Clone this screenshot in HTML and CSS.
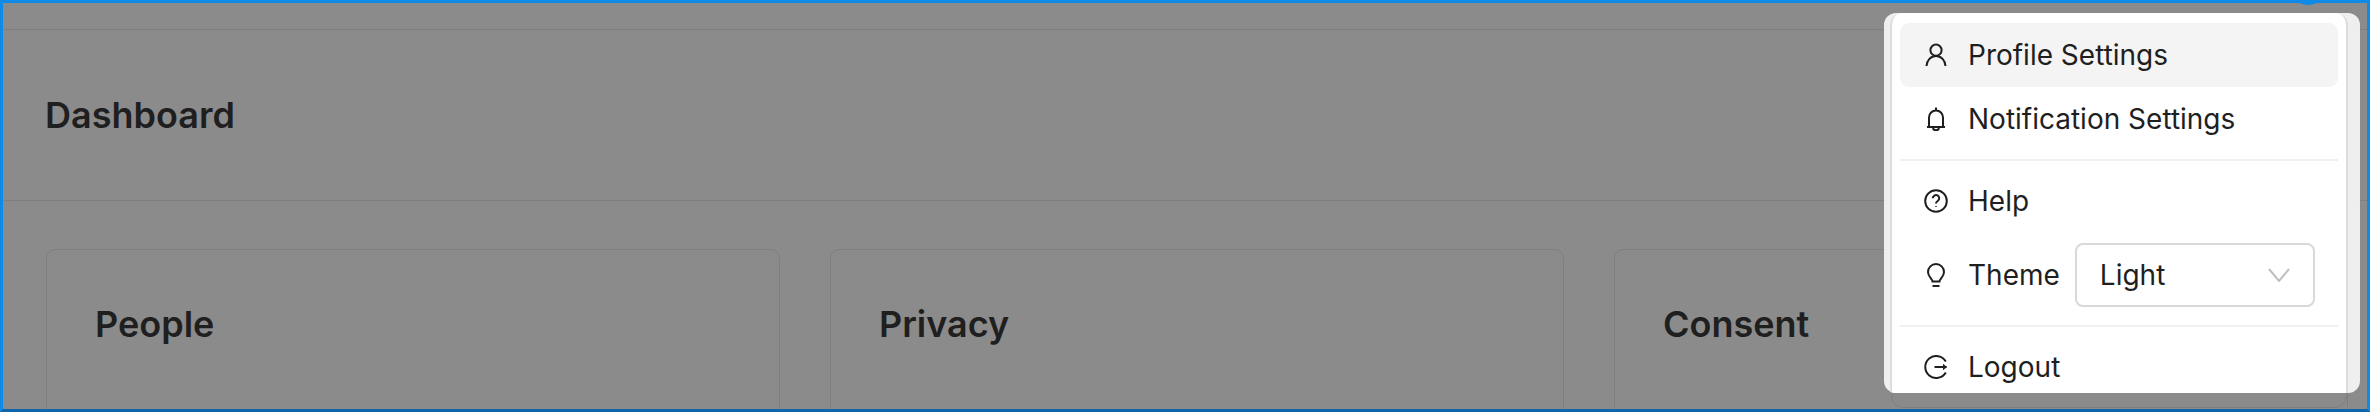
FILE: index.html
```html
<!DOCTYPE html>
<html lang="en">
<head>
<meta charset="utf-8">
<title>Dashboard</title>
<link rel="stylesheet" href="styles.css">
</head>
<body>
<div class="frame">
  <div class="topbar"></div>
  <header class="page-head"><h1 class="page-title">Dashboard</h1></header>
  <main class="cards">
    <section class="card"><h2 class="card-title">People</h2></section>
    <section class="card"><h2 class="card-title">Privacy</h2></section>
    <section class="card"><h2 class="card-title">Consent</h2></section>
  </main>
  <div class="avatar"></div>
  <div class="ghost"></div>
  <nav class="menu">
    <div class="menu-panel">
      <a class="item item-active">
        <svg class="icon" viewBox="0 0 24 24"><circle cx="12" cy="7.200" r="5.600"/><path d="M2.500 23c.3-5.800 4.300-10 9.500-10s9.200 4.200 9.500 10"/></svg>
        <span>Profile Settings</span>
      </a>
      <a class="item">
        <svg class="icon" viewBox="0 0 24 24"><path d="M12 .5v3M5 20V10.500a7 7 0 0 1 14 0V20M3 20h18M9 20.300a3 3 0 0 0 6 0"/></svg>
        <span>Notification Settings</span>
      </a>
      <div class="divider"></div>
      <a class="item">
        <svg class="icon" viewBox="0 0 24 24"><circle cx="12" cy="12" r="10.800"/><path d="M8.800 9.300a3.200 3.200 0 1 1 4.900 2.700c-1.100.7-1.700 1.300-1.700 2.500"/><path d="M12 17.300v.6"/></svg>
        <span>Help</span>
      </a>
      <div class="item item-theme">
        <svg class="icon" viewBox="0 0 24 24"><path d="M8.500 18.500c0-2.500-4.500-4.500-4.500-9.500a8 8 0 0 1 16 0c0 5-4.500 7-4.500 9.500zM8.500 23h7"/></svg>
        <span>Theme</span>
        <div class="select">
          <span>Light</span>
          <svg class="chevron" viewBox="0 0 22 14"><path d="M1 1l10 12L21 1"/></svg>
        </div>
      </div>
      <div class="divider divider-low"></div>
      <a class="item">
        <svg class="icon" viewBox="0 0 24 24"><path d="M21.800 6.500a11 11 0 1 0 0 11M10.500 12h12"/><path class="arrow" d="M19 8.800l4 3.200-4 3.200z"/></svg>
        <span>Logout</span>
      </a>
    </div>
  </nav>
</div>
</body>
</html>
```
FILE: styles.css
```css
* { box-sizing: border-box; }
html, body { margin: 0; padding: 0; }
body { font-family: Inter, "Noto Sans", sans-serif; color: #1f1f1f; background: #8b8b8b; overflow: hidden; }
.frame {
  position: relative;
  width: 2370px;
  height: 412px;
  overflow: hidden;
  background: #8b8b8b;
  border: 3px solid #0f8ae6;
  border-bottom-color: #0f65a8;
}
.topbar { height: 27px; border-bottom: 1.5px solid #7f7f7f; }
.page-head {
  height: 171px;
  padding: 0 42px;
  display: flex;
  align-items: center;
  border-bottom: 1.5px solid #7f7f7f;
}
.page-title { margin: 0; font-size: 36px; font-weight: 600; }
.cards {
  display: grid;
  grid-template-columns: repeat(3, 734px);
  gap: 50px;
  padding: 48px 0 0 43px;
}
.card {
  height: 300px;
  padding: 52px 48px;
  border: 1.5px solid #7f7f7f;
  border-radius: 9px;
}
.card-title { margin: 0; font-size: 36px; line-height: 44px; font-weight: 600; }
.avatar {
  position: absolute;
  top: -36px;
  right: 40px;
  width: 38px;
  height: 38px;
  border-radius: 50%;
  background: #0f8ae6;
}
.ghost {
  position: absolute;
  left: 1888px;
  right: 20px;
  top: 300px;
  bottom: 0;
  margin-bottom: 1px;
  border: 1.5px solid #7f7f7f;
  border-radius: 12px;
}
.menu {
  position: absolute;
  top: 10px;
  right: 7px;
  width: 476px;
  height: 380px;
  padding: 0 12px 0 6px;
  background: rgba(255, 255, 255, .86);
  border-radius: 12px;
  overflow: hidden;
}
.menu-panel {
  height: 100%;
  padding: 10px 8px;
  background: #fff;
  border-left: 2px solid #ddd;
  border-right: 2px solid #ddd;
  border-radius: 12px 12px 0 0;
  overflow: hidden;
}
.item {
  display: flex;
  align-items: center;
  gap: 20px;
  height: 64px;
  padding: 0 24px;
  border-radius: 9px;
  font-size: 28px;
  color: #1f1f1f;
}
.item-active { background: #f4f4f4; }
.icon {
  flex: none;
  width: 24px;
  height: 24px;
  fill: none;
  stroke: #1f1f1f;
  stroke-width: 2;
}
.icon .arrow { fill: #1f1f1f; stroke: none; }
.divider { height: 2px; margin: 8px 0; background: #f0f0f0; }
.divider-low { margin: 18px 0 8px; }
.item-theme { margin-top: 10px; }
.select {
  flex: none;
  display: flex;
  align-items: center;
  justify-content: space-between;
  width: 240px;
  height: 64px;
  margin-left: -5px;
  padding: 0 23px;
  border: 2px solid #d9d9d9;
  border-radius: 8px;
  background: #fff;
}
.chevron { width: 22px; height: 14px; fill: none; stroke: #bfbfbf; stroke-width: 2; }
```
